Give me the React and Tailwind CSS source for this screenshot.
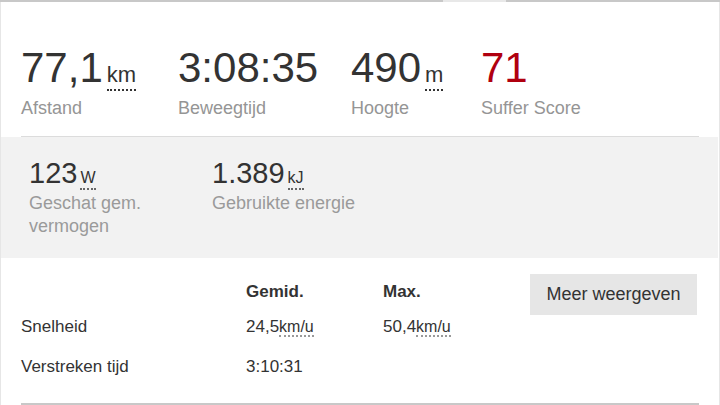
const font = "font-['Liberation_Sans',Arial,sans-serif]";

function BigStat({ value, unit, label, width, red }) {
  return (
    <div className={`${width} flex flex-col`}>
      <div
        className={`text-[42px] leading-[48px] whitespace-nowrap ${red ? 'text-[#b0000f]' : 'text-[#333]'}`}
      >
        {value}
        {unit && (
          <span className="text-[22px] ml-[4px] inline-block leading-[28px] border-b-2 border-dotted border-[#333]">
            {unit}
          </span>
        )}
      </div>
      <div className="mt-[5px] text-[18px] leading-[22px] text-[#959595]">{label}</div>
    </div>
  );
}

function SmallStat({ value, unit, label }) {
  return (
    <div className="w-[183px] pr-[30px] flex flex-col">
      <div className="text-[29px] leading-[34px] text-[#333] whitespace-nowrap">
        {value}
        <span className="text-[16px] ml-[3px] inline-block leading-[20px] border-b-2 border-dotted border-[#666]">
          {unit}
        </span>
      </div>
      <div className="mt-[2px] text-[18px] leading-[23px] text-[#9a9a9a]">{label}</div>
    </div>
  );
}

function Speed({ value }) {
  return (
    <span className="whitespace-nowrap">
      {value}
      <span className="text-[16px] border-b-2 border-dotted border-[#999]">km/u</span>
    </span>
  );
}

export default function App() {
  return (
    <div className={`${font} w-[720px] h-[405px] overflow-hidden bg-white flex flex-col`}>
      <div className="flex h-[2px] shrink-0">
        <div className="w-[443px] bg-[#c8c8c8]" />
        <div className="w-[63px] bg-[#e8e8e8]" />
        <div className="flex-1 bg-[#c8c8c8]" />
      </div>
      <div className="flex-1 flex flex-col border-x border-[#e6e6e6]">
        <div className="px-[20px] pt-[42px]">
          <div className="flex pb-[17px] border-b border-[#dcdcdc]">
            <BigStat value="77,1" unit="km" label="Afstand" width="w-[157px]" />
            <BigStat value="3:08:35" label="Beweegtijd" width="w-[173px]" />
            <BigStat value="490" unit="m" label="Hoogte" width="w-[130px]" />
            <BigStat value="71" label="Suffer Score" width="w-[160px]" red />
          </div>
        </div>
        <div className="bg-[#f2f2f2] mr-[1px] pl-[28px] pt-[19px] h-[121px] flex">
          <SmallStat value="123" unit="W" label="Geschat gem. vermogen" />
          <SmallStat value="1.389" unit="kJ" label="Gebruikte energie" />
        </div>
        <div className="px-[20px] pt-[16px] flex text-[17px] text-[#333]">
          <div className="flex-1">
            <div className="flex h-[30px] items-center pt-[6px]">
              <div className="w-[225px]" />
              <div className="w-[137px] font-bold">Gemid.</div>
              <div className="font-bold">Max.</div>
            </div>
            <div className="flex h-[38px] items-center mt-[4px]">
              <div className="w-[225px]">Snelheid</div>
              <div className="w-[137px]"><Speed value="24,5" /></div>
              <div><Speed value="50,4" /></div>
            </div>
            <div className="flex h-[38px] items-center mt-[2px]">
              <div className="w-[225px]">Verstreken tijd</div>
              <div className="w-[137px]">3:10:31</div>
            </div>
          </div>
          <button className="self-start h-[41px] w-[167px] mr-[2px] bg-[#e6e6e6] text-[18px] text-[#333]">
            Meer weergeven
          </button>
        </div>
        <div className="mt-auto mx-[20px] h-[2px] bg-[#c8c8c8]" />
      </div>
    </div>
  );
}
